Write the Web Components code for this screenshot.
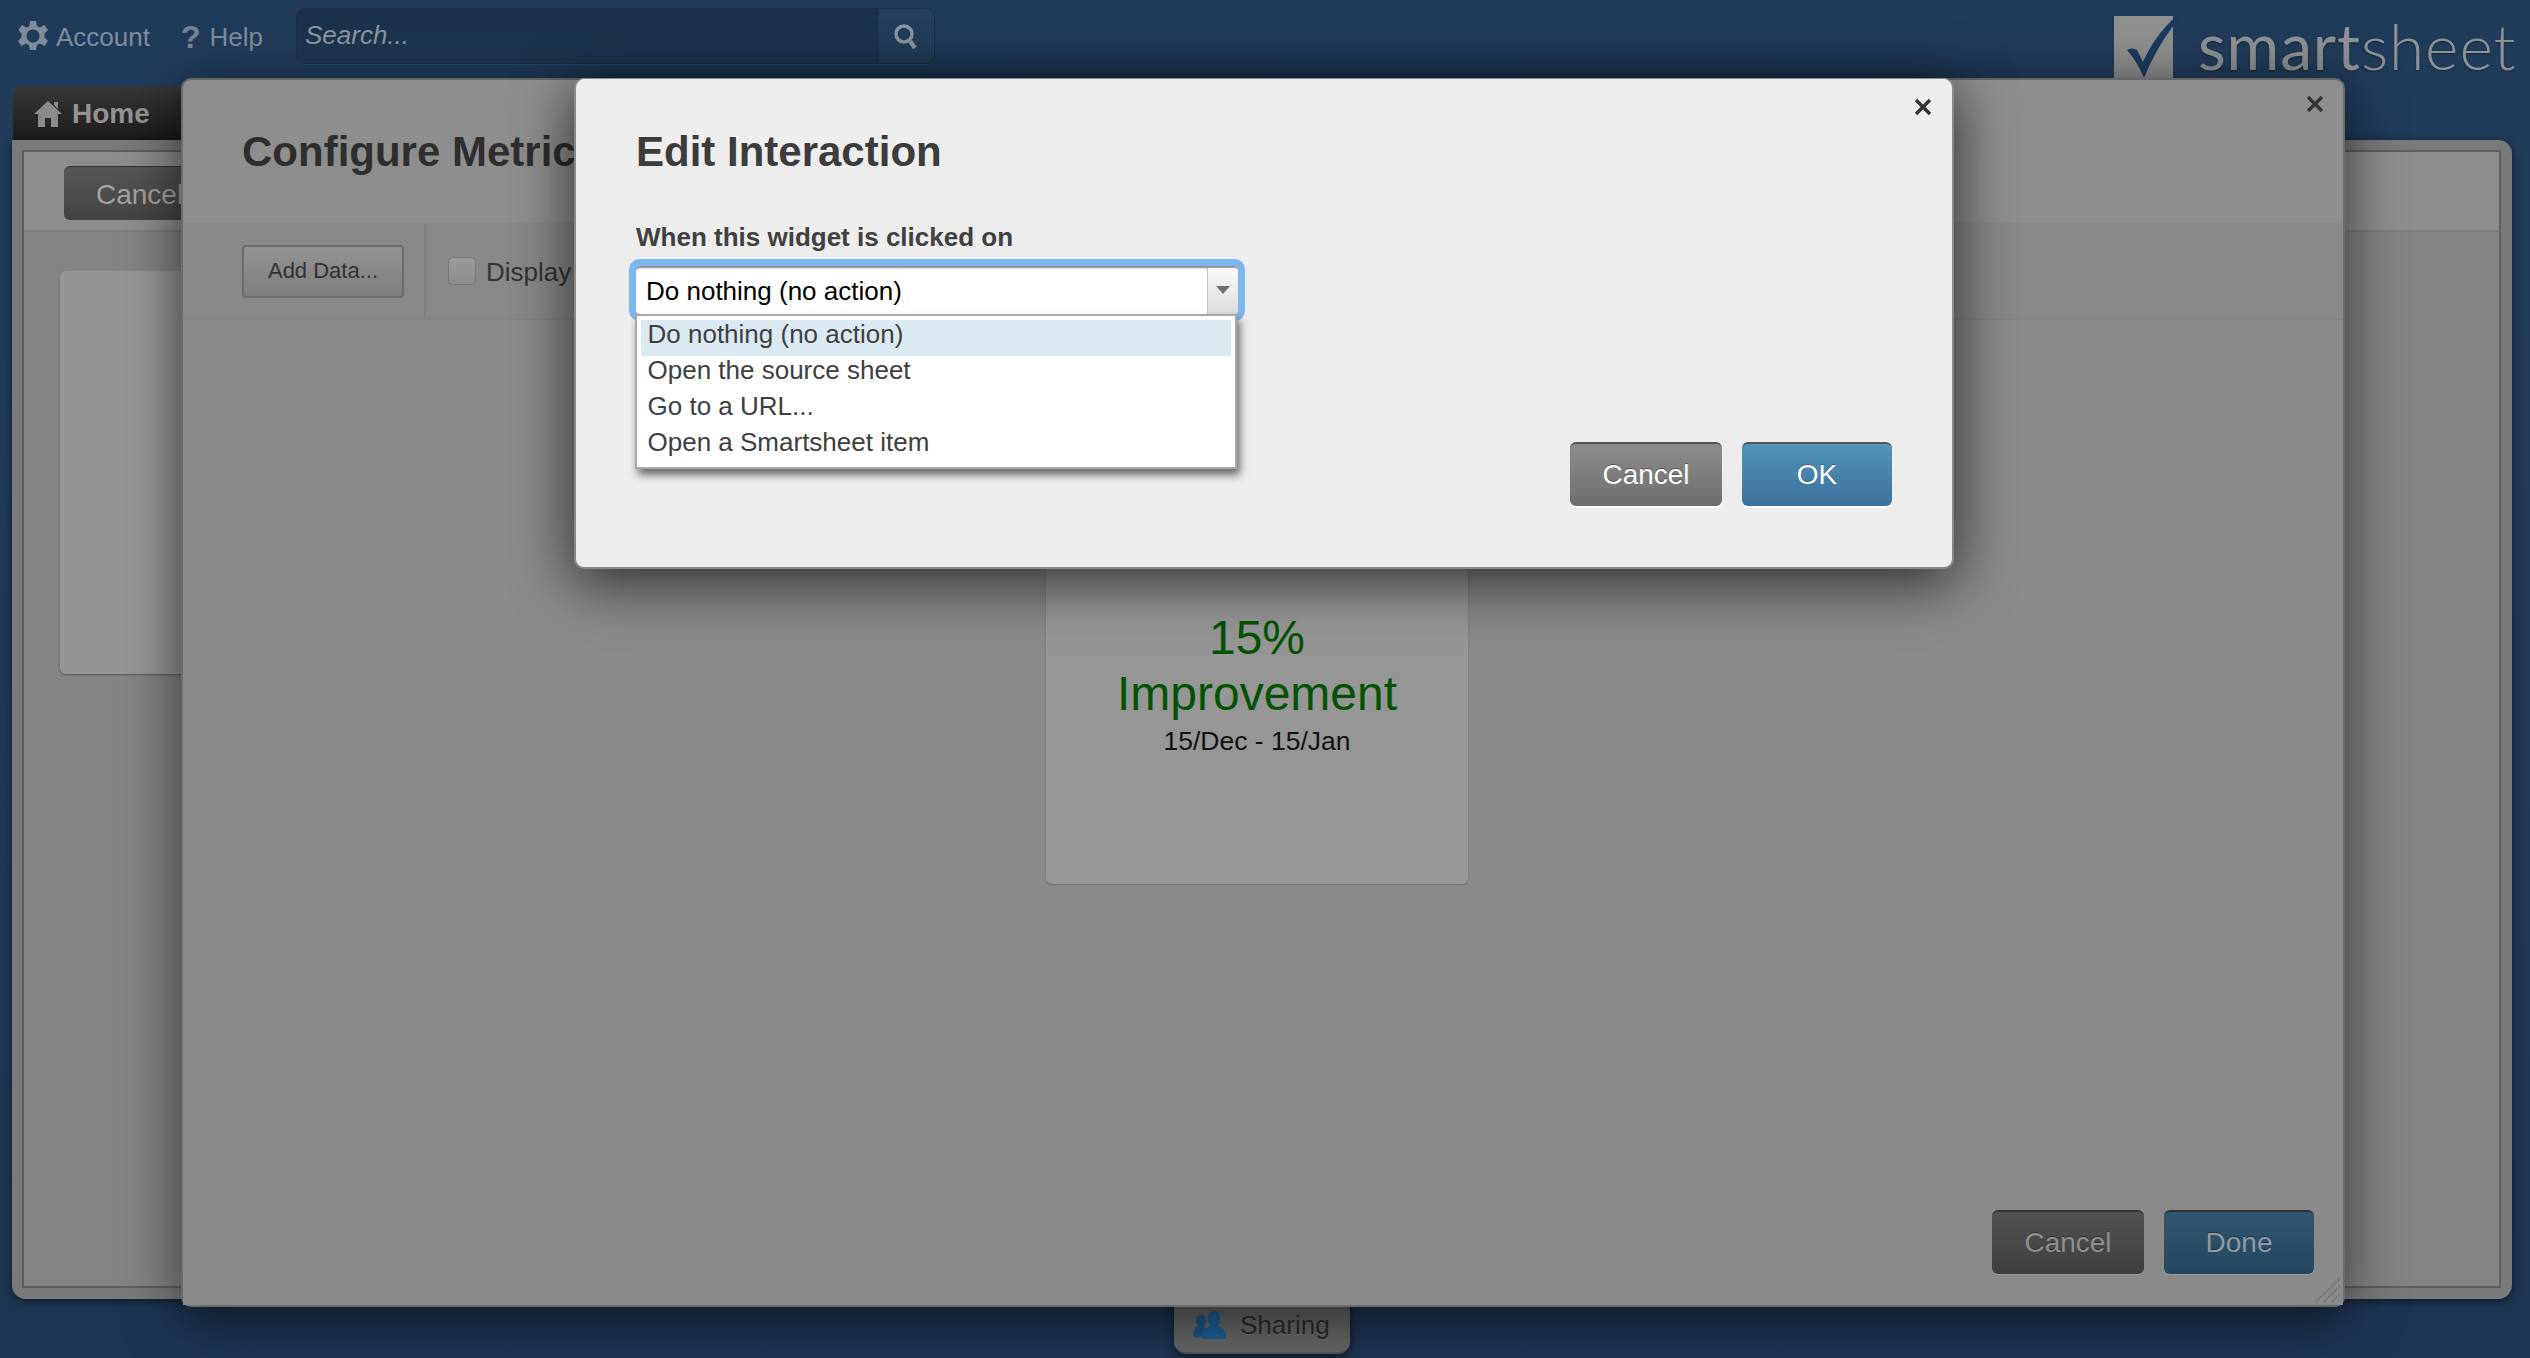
<!DOCTYPE html>
<html lang="en"><head><meta charset="utf-8"><title>Edit Interaction</title>
<style>
html,body{margin:0;height:100%;overflow:hidden}
body{font-family:"Liberation Sans",Arial,sans-serif;background:linear-gradient(#213c5b,#1f3855 60%,#1e3552)}
ss-app{height:1358px}
</style></head><body>
<ss-app>
  <ss-topbar></ss-topbar>
  <ss-home-tab>Home</ss-home-tab>
  <ss-main-panel></ss-main-panel>
  <ss-sharing-tab>Sharing</ss-sharing-tab>
  <ss-configure-dialog></ss-configure-dialog>
  <ss-edit-dialog></ss-edit-dialog>
</ss-app>
<script>
function def(name,html,init){
  customElements.define(name,class extends HTMLElement{
    constructor(){super();this.attachShadow({mode:'open'}).innerHTML=html;}
  });
}
const X=`<svg viewBox="0 0 20 20" width="20" height="20"><path d="M3 3L17 17M17 3L3 17" stroke="currentColor" stroke-width="3.4" fill="none"/></svg>`;

def('ss-app',`<style>:host{display:flex;flex-direction:column;position:relative;overflow:hidden;width:2530px}</style><slot></slot>`);

def('ss-button',`<style>
:host{display:inline-flex;align-items:center;justify-content:center;box-sizing:border-box;height:64px;border-radius:6px;font-size:28px;color:#fff;
 background:linear-gradient(#8c8c8c,#6e6e6e);border-top:2px solid #555;box-shadow:0 2px 0 #fff;text-shadow:0 -1px 0 rgba(0,0,0,.35)}
:host([kind=ok]){background:linear-gradient(#5193b9,#3c719b);}
:host([kind=dim]){background:linear-gradient(#525252,#404040);border-top-color:#333;color:#8f8f8f;box-shadow:0 1px 0 #999}
:host([kind=dimok]){background:linear-gradient(#31576f,#25465f);border-top-color:#333;color:#8f9aa3;box-shadow:0 1px 0 #999}
</style><slot></slot>`);

def('ss-topbar',`<style>
:host{display:flex;align-items:flex-start;height:86px;flex:none;color:#7f8c9a;font-size:26px;position:relative}
.item{display:flex;align-items:center;height:56px;margin-top:9px;white-space:nowrap}
.acct{margin-left:18px}.acct svg{margin-right:8px;margin-top:-2px}
.help{margin-left:31px}.q{font-size:32px;font-weight:700;margin-right:9px;color:#788694}
.search{margin:8px 0 0 33px;width:639px;height:56px;box-sizing:border-box;display:flex;border:1px solid #1a2f47;border-radius:9px;background:linear-gradient(#1b3048,#1f3852);overflow:hidden;box-shadow:0 1px 0 #2c4a6a}
.ph{flex:1;font-style:italic;color:#8a95a2;line-height:52px;padding-left:8px}
.btn{width:55px;background:#243e5b;display:flex;align-items:center;justify-content:center;border-left:1px solid #1d3550}
.logo{position:absolute;left:2114px;top:6px;display:flex;color:#8f9294;font-family:Lato,"Liberation Sans",sans-serif}
.word{position:absolute;left:84px;top:2px;font-size:64px;line-height:76px;letter-spacing:.9px;white-space:nowrap;text-shadow:0 1px 2px rgba(0,0,0,.35)}
.word b{font-weight:400}.word i{font-style:normal;font-weight:300}
</style>
<div class="item acct"><svg width="30" height="32" viewBox="0 0 30 32"><path fill="#7f8c9a" fill-rule="evenodd" d="M12 1h6l1 5 3 1.500 4.500-2.500 3.500 5-3.500 3.500v4l3.500 3.500-3.500 5-4.500-2.500-3 1.500-1 5h-6l-1-5-3-1.500-4.500 2.500-3.500-5 3.500-3.500v-4L.5 10 4 5l4.500 2.500 3-1.500zM15 9.500a6.500 6.500 0 1 0 .01 0z"/></svg>Account</div>
<div class="item help"><span class="q">?</span>Help</div>
<div class="search"><div class="ph">Search...</div><div class="btn"><svg width="28" height="30" viewBox="0 0 28 30"><circle cx="12" cy="13" r="8" fill="none" stroke="#8a96a3" stroke-width="3.500"/><path d="M18 20l5 7" stroke="#8a96a3" stroke-width="4.500"/></svg></div></div>
<div class="logo"><svg width="76" height="72" viewBox="0 0 76 72" style="overflow:visible"><rect x="0" y="10" width="59" height="64" fill="#8f8f8f"/><path d="M13 44c4-2 7-2 10 0l6 12C38 36 52 16 75 0 58 20 42 42 30 72 25 60 20 52 13 44z" fill="#1b3a5f"/></svg><div class="word"><b>smart</b><i>sheet</i></div></div>`);

def('ss-home-tab',`<style>
:host{display:flex;align-items:center;box-sizing:border-box;flex:none;height:54px;width:200px;margin-left:13px;padding-left:21px;padding-top:2px;border-radius:8px 8px 0 0;background:linear-gradient(#373737,#1c1c1c);color:#939393;font-size:28px;font-weight:700}
svg{margin-right:10px}
</style><svg width="28" height="26" viewBox="0 0 28 26"><path fill="#8b8b8b" d="M14 0L28 13h-4v13h-7v-9h-6v9H4V13H0zM20 1h4v7l-4-4z"/></svg><slot></slot>`);

def('ss-main-panel',`<style>
:host{display:flex;flex-direction:column;flex:none;box-sizing:border-box;width:2500px;height:1159px;margin-left:12px;border:solid #7a7a7a;border-width:10px 11px 11px 10px;border-radius:0 14px 14px 14px;box-shadow:0 2px 10px rgba(0,0,0,.5)}
.in{flex:1;display:flex;flex-direction:column;border:2px solid #5f5f5f;background:#848484}
.head{height:80px;box-sizing:border-box;padding:14px 0 0 40px;background:#8d8d8d;border-bottom:2px solid #7c7c7c}
.cancel{display:flex;align-items:center;box-sizing:border-box;width:180px;height:54px;padding:2px 0 0 32px;border-radius:6px;background:linear-gradient(#565656,#444);color:#a2a2a2;font-size:28px;border-top:1px solid #333}
.body{flex:1;padding:39px 0 0 36px}
.card{width:300px;height:403px;border-radius:6px;background:#959595;box-shadow:0 1px 2px rgba(0,0,0,.35)}
</style><div class="in"><div class="head"><div class="cancel">Cancel</div></div><div class="body"><div class="card"></div></div></div>`);

def('ss-sharing-tab',`<style>
:host{position:absolute;left:1174px;top:1290px;width:176px;height:64px;box-sizing:border-box;padding:17px 0 0 19px;display:flex;align-items:flex-start;border-radius:0 0 12px 12px;background:#666;color:#2b2b2b;font-size:26px;box-shadow:0 3px 10px rgba(0,0,0,.55);border-bottom:2px solid #555;text-shadow:0 1px 0 #777}
svg{margin-right:14px;margin-top:4px}
span{line-height:36px}
</style><svg width="33" height="28" viewBox="0 0 33 28"><ellipse cx="8" cy="10" rx="5" ry="6.500" fill="#1c5684"/><path fill="#1c5684" d="M5 15h6l3 3-5 8H0c0-5 1-9 5-11z"/><ellipse cx="21" cy="8" rx="6.500" ry="8.500" fill="#1d5f95"/><path fill="#1d5f95" d="M17 14h8c1 2 7 4 8 9v5H9v-5c1-5 7-7 8-9z"/></svg><span><slot></slot></span>`);

def('ss-configure-dialog',`<style>
:host{position:absolute;left:181px;top:78px;width:2164px;height:1229px;box-sizing:border-box;display:flex;flex-direction:column;background:#8e8e8e;border:2px solid #6c6c6c;border-top-color:#666;border-radius:10px;box-shadow:0 10px 55px rgba(0,0,0,.62);color:#2e2e2e}
h1{margin:0;height:142px;flex:none;box-sizing:border-box;padding:48px 0 0 59px;font-size:42px;line-height:48px;font-weight:700;white-space:nowrap}
.x{position:absolute;right:18px;top:14px;color:#333;display:flex}
.bar{display:flex;align-items:center;height:98px;flex:none;background:#888;padding:2px 0 0 59px;box-sizing:border-box;border-bottom:2px solid #838383}
.add{display:flex;align-items:center;justify-content:center;box-sizing:border-box;width:162px;height:53px;border:2px solid #6d6d6d;border-radius:4px;background:linear-gradient(#919191,#7f7f7f);font-size:22px;color:#333}
.sep{width:2px;height:94px;background:#808080;margin-left:20px}
.cb{width:28px;height:28px;box-sizing:border-box;margin-left:22px;border:1px solid #777;border-radius:5px;background:linear-gradient(#9a9a9a,#8c8c8c)}
.dl{font-size:26px;margin-left:10px;margin-top:2px;color:#333}
.body{flex:1;position:relative;padding:161px 0 0 863px;background:#8a8a8a;box-sizing:border-box}
.metric{width:422px;height:403px;border-radius:6px;background:#969696;box-shadow:0 1px 2px rgba(0,0,0,.2);box-sizing:border-box;padding:129px 0 0;text-align:center}
.big{font-size:48px;line-height:56px;color:#045204}
.sub{font-size:26.500px;line-height:36px;color:#111;margin-top:1px}
.foot{position:absolute;right:29px;bottom:31px;display:flex;gap:20px}
.grip{position:absolute;right:2px;bottom:2px}
ss-button.c{width:152px}ss-button.d{width:150px}
</style>
<h1>Configure Metric</h1><div class="x">${X}</div>
<div class="bar"><div class="add">Add Data...</div><div class="sep"></div><div class="cb"></div><div class="dl">Display</div></div>
<div class="body"><div class="metric"><div class="big">15%<br>Improvement</div><div class="sub">15/Dec - 15/Jan</div></div>
<div class="foot"><ss-button class="c" kind="dim">Cancel</ss-button><ss-button class="d" kind="dimok">Done</ss-button></div>
<svg class="grip" width="26" height="26" viewBox="0 0 26 26"><path d="M1 25L25 1M9 25L25 9M17 25l8-8" stroke="#777" stroke-width="2.500" stroke-dasharray="2 1" fill="none"/></svg></div>`);

def('ss-select',`<style>
:host{display:block;position:relative;width:602px;height:48px;box-sizing:border-box;margin-top:14px;border-radius:4px;background:#fff;box-shadow:0 0 0 7px #7eb6ef,inset 0 3px 2px -1px #888;font-size:26px;color:#000}
.val{line-height:46px;padding:2px 0 0 10px}
.arrow{position:absolute;right:0;top:2px;bottom:0;width:31px;box-sizing:border-box;border-left:1px solid #c4c4c4;background:linear-gradient(#fafafa,#dcdcdc);border-radius:0 4px 4px 0}
.arrow::after{content:"";position:absolute;left:8px;top:18px;border:7px solid transparent;border-top:8px solid #707070;border-bottom:0}
.menu{position:absolute;left:-1px;top:48px;width:602px;box-sizing:border-box;padding:4px 4px 3px;background:#fff;border:2px solid #a9a9a9;box-shadow:3px 6px 8px rgba(0,0,0,.55);color:#404040}
.row{height:36px;line-height:28px;padding-left:6.500px;white-space:nowrap}
.row.sel{background:#dbe9f3}
</style><div class="val">Do nothing (no action)</div><div class="arrow"></div>
<div class="menu"><div class="row sel">Do nothing (no action)</div><div class="row">Open the source sheet</div><div class="row">Go to a URL...</div><div class="row">Open a Smartsheet item</div></div>`);

def('ss-edit-dialog',`<style>
:host{position:absolute;left:574px;top:78px;width:1380px;height:491px;box-sizing:border-box;background:#ededed;border:solid #8a8a8a;border-width:1px 2px 2px 2px;border-radius:10px;box-shadow:0 12px 60px rgba(0,0,0,.7);color:#404040;padding:0 60px}
h1{margin:0;padding-top:49px;font-size:42px;line-height:48px;font-weight:700;white-space:nowrap;color:#3c3c3c}
label{display:block;margin-top:46px;font-size:26px;line-height:30px;font-weight:700;white-space:nowrap}
.x{position:absolute;right:19px;top:18px;color:#333;display:flex}
.foot{display:flex;justify-content:flex-end;gap:20px;margin-top:128px}
ss-button.c{width:152px}ss-button.o{width:150px}
</style>
<div class="x">${X}</div><h1>Edit Interaction</h1><label>When this widget is clicked on</label><ss-select></ss-select>
<div class="foot"><ss-button class="c">Cancel</ss-button><ss-button class="o" kind="ok">OK</ss-button></div>`);
</script>
</body></html>
